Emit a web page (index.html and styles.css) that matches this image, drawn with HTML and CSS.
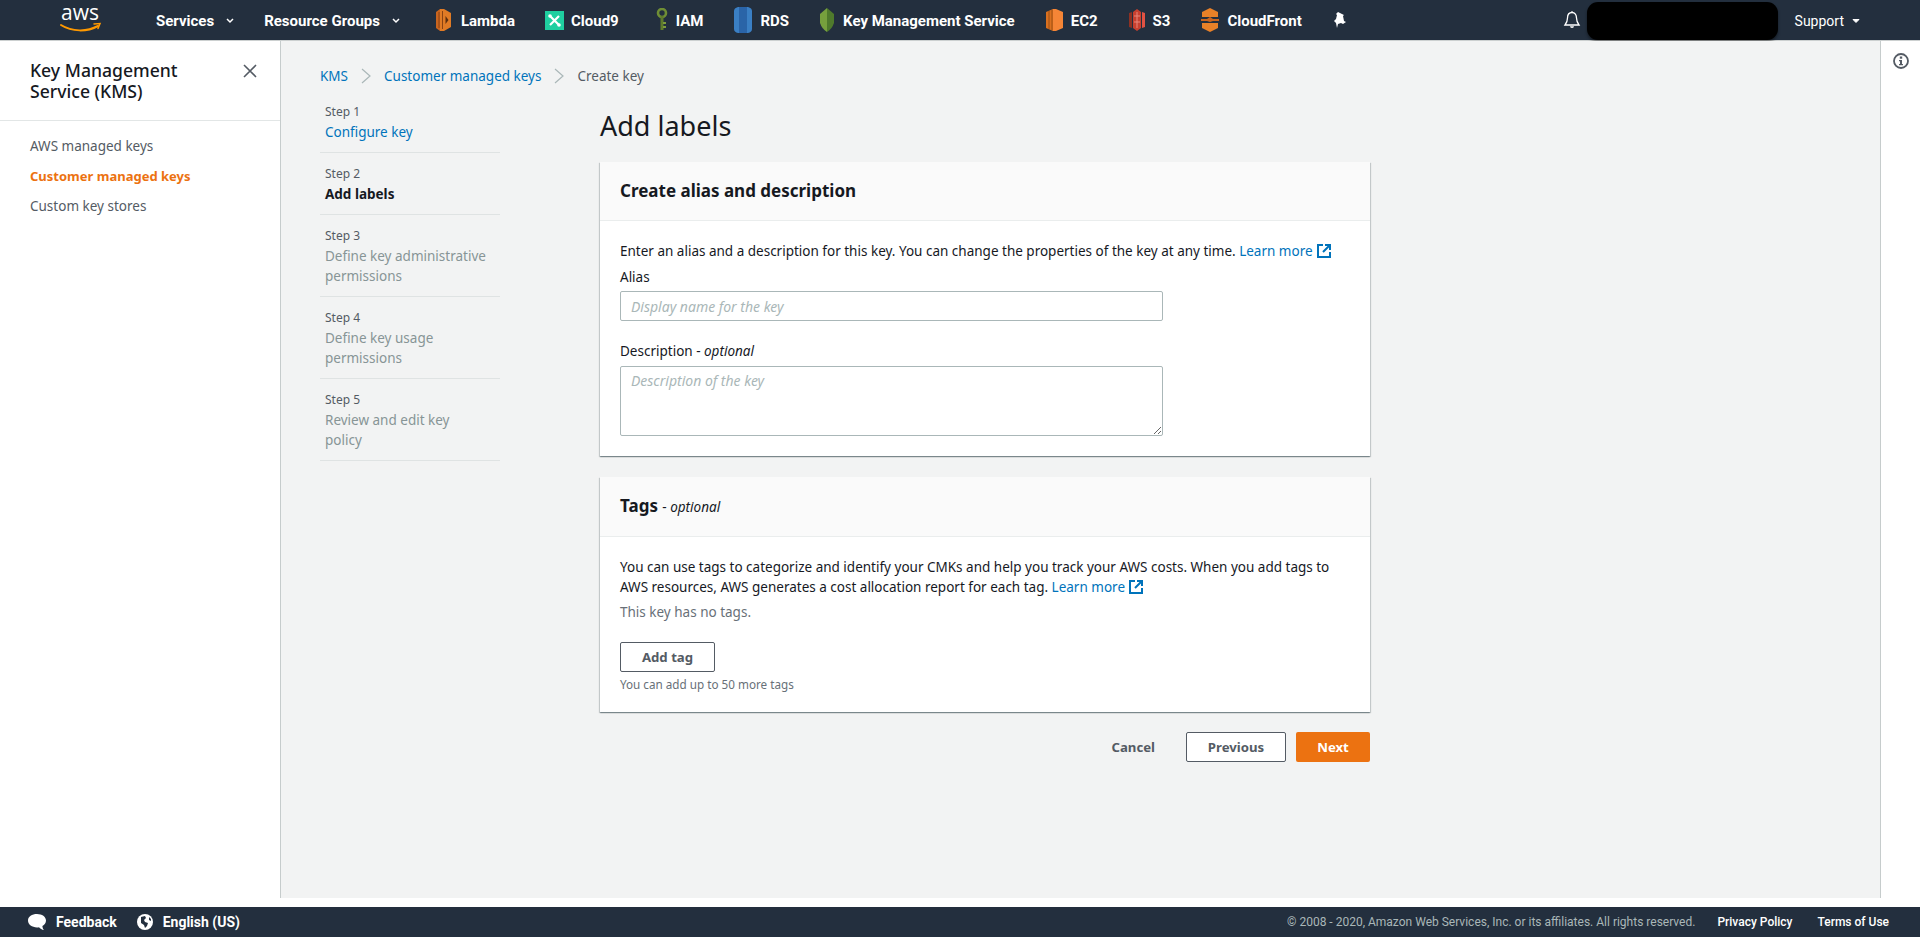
FILE: index.html
```html
<!DOCTYPE html>
<html lang="en">
<head>
<meta charset="utf-8">
<title>Create key</title>
<link rel="stylesheet" href="styles.css">
</head>
<body>
<header class="topbar">
  <svg class="logo" width="42" height="34" viewBox="0 0 42 34"><text x="20" y="17" text-anchor="middle" class="logo-text">aws</text><path d="M1 22c11 7 26 7 37 1" fill="none" stroke="#f90" stroke-width="2" stroke-linecap="round"/><path d="M34 21l6-.5-2 5" fill="none" stroke="#f90" stroke-width="1.500" stroke-linecap="round"/></svg>
  <a class="menu menu-services">Services<svg class="caret" width="8" height="6" viewBox="0 0 8 6"><path d="M1 1l3 3 3-3" fill="none" stroke="#fff" stroke-width="1.500"/></svg></a>
  <a class="menu menu-groups">Resource Groups<svg class="caret" width="8" height="6" viewBox="0 0 8 6"><path d="M1 1l3 3 3-3" fill="none" stroke="#fff" stroke-width="1.500"/></svg></a>
  <nav class="shortcuts">
    <a class="shortcut s-lambda"><svg width="17" height="24" viewBox="0 0 17 24"><path d="M5 1l-4 3v16l4 3z" fill="#c9651f"/><path d="M5 1h4l7 4v14l-7 4H5z" fill="#e07b25"/><path d="M7.500 3v18M4 4v16" stroke="#8a4312"/><path d="M10.500 8l3 4-3 4z" fill="#5c2f0f"/></svg>Lambda</a>
    <a class="shortcut s-c9"><svg width="19" height="19" viewBox="0 0 19 19"><rect width="19" height="19" fill="#1fcfa0"/><path d="M5 5l9 9M14 5l-9 9" stroke="#fff" stroke-width="2.200"/><circle cx="5" cy="5" r="1.800" fill="#fff"/><circle cx="14" cy="14" r="1.800" fill="#fff"/></svg>Cloud9</a>
    <a class="shortcut s-iam"><svg width="12" height="24" viewBox="0 0 12 24"><circle cx="6" cy="5" r="4" fill="none" stroke="#6f8e35" stroke-width="2.600"/><path d="M6 8v14" stroke="#5e7a2c" stroke-width="3"/><path d="M7 15h3M7 19h3" stroke="#7d9c3c" stroke-width="2"/></svg>IAM</a>
    <a class="shortcut"><svg width="18" height="26" viewBox="0 0 18 26"><path d="M4 0h10q4 1 4 4v18q0 3-4 4H4q-4-1-4-4V4q0-3 4-4z" fill="#3a7fc4"/><path d="M5 0h8v26H5z" fill="#2a64a8"/></svg>RDS</a>
    <a class="shortcut s-kms"><svg width="16" height="24" viewBox="0 0 16 24"><path d="M8 0l7 6v9q-2 6-7 9z" fill="#4f7a2c"/><path d="M8 0L1 6v9q2 6 7 9z" fill="#76a03d"/></svg>Key Management Service</a>
    <a class="shortcut"><svg width="17" height="24" viewBox="0 0 17 24"><path d="M7 1L0 4v16l7 3z" fill="#d9701f"/><path d="M7 1h3l7 3v16l-7 3H7z" fill="#f58536"/><path d="M3 3v18M6 2v20" stroke="#9c4f14"/></svg>EC2</a>
    <a class="shortcut"><svg width="16" height="24" viewBox="0 0 16 24"><path d="M0 5l3-1v16l-3-1z" fill="#8c3123"/><path d="M16 5l-3-1v16l3-1z" fill="#e05243"/><path d="M4 4l4-3 4 3v16l-4 3-4-3z" fill="#c7402f"/><path d="M5 8h6M5 14h6M8 4v16" stroke="#e8867a"/></svg>S3</a>
    <a class="shortcut"><svg width="18" height="24" viewBox="0 0 18 24"><path d="M9 0L1 4v5h16V4z" fill="#e88128"/><path d="M1 15h16v5l-8 4-8-4z" fill="#e88128"/><path d="M0 11h6l3-2 3 2h6v2h-6l-3 1-3-1H0z" fill="#c9651f"/></svg>CloudFront</a>
    <a class="pin"><svg width="14" height="16" viewBox="0 0 14 16"><path d="M5 0l6 3-1 1 1 5 2 1-3 2-2-1-3 1-1 4-1-5-2-2 2-2 1-4-1-1z" fill="#fff"/></svg></a>
  </nav>
  <div class="top-right">
    <svg class="bell" width="18" height="18" viewBox="0 0 18 18"><path d="M9 1.500c-3 0-4.500 2.500-4.500 5.500 0 3.500-1 5-2.500 7h14c-1.500-2-2.500-3.500-2.500-7 0-3-1.500-5.500-4.500-5.500z" fill="none" stroke="#fff" stroke-width="1.300"/><path d="M7 15.300h4a2 1.700 0 0 1-4 0z" fill="#fff"/><path d="M9 0v2" stroke="#fff"/></svg>
    <div class="redact"></div>
    <a class="support">Support<svg class="caret" width="8" height="6" viewBox="0 0 8 6"><path d="M1 1.500l3 3 3-3z" fill="#fff" stroke="#fff"/></svg></a>
  </div>
</header>

<div class="shell">
  <aside class="sidebar">
    <div class="side-head">
      <h2>Key Management Service (KMS)</h2>
      <svg class="close" width="14" height="14" viewBox="0 0 14 14"><path d="M1 1l12 12M13 1L1 13" stroke="#545b64" stroke-width="1.600"/></svg>
    </div>
    <ul class="side-nav">
      <li>AWS managed keys</li>
      <li class="active">Customer managed keys</li>
      <li>Custom key stores</li>
    </ul>
  </aside>

  <main class="content">
    <div class="crumbs">
      <a class="link">KMS</a>
      <svg width="10" height="16" viewBox="0 0 10 16"><path d="M1 1l8 7-8 7" fill="none" stroke="#aab7b8" stroke-width="1.200"/></svg>
      <a class="link">Customer managed keys</a>
      <svg width="10" height="16" viewBox="0 0 10 16"><path d="M1 1l8 7-8 7" fill="none" stroke="#aab7b8" stroke-width="1.200"/></svg>
      <span class="crumb-now">Create key</span>
    </div>
    <div class="wizard">
      <ol class="steps">
        <li><small>Step 1</small><a class="link">Configure key</a></li>
        <li><small>Step 2</small><b>Add labels</b></li>
        <li class="off"><small>Step 3</small><span>Define key administrative permissions</span></li>
        <li class="off"><small>Step 4</small><span>Define key usage permissions</span></li>
        <li class="off"><small>Step 5</small><span>Review and edit key policy</span></li>
      </ol>
      <section class="form">
        <h1>Add labels</h1>
        <div class="card">
          <div class="card-head"><h3>Create alias and description</h3></div>
          <div class="card-body body-alias">
            <p>Enter an alias and a description for this key. You can change the properties of the key at any time. <a class="link">Learn more</a><svg class="ext" width="14" height="14" viewBox="0 0 14 14"><path d="M6 1H1v12h12V8" fill="none" stroke="#0073bb" stroke-width="2"/><path d="M8 1h5v5M13 1L6 8" fill="none" stroke="#0073bb" stroke-width="2"/></svg></p>
            <label class="lbl">Alias</label>
            <input class="field" type="text" placeholder="Display name for the key">
            <label class="lbl lbl-desc">Description - <i>optional</i></label>
            <textarea class="field area" placeholder="Description of the key"></textarea>
          </div>
        </div>
        <div class="card">
          <div class="card-head head-tags"><h3>Tags <span class="opt">- <i>optional</i></span></h3></div>
          <div class="card-body body-tags">
            <p>You can use tags to categorize and identify your CMKs and help you track your AWS costs. When you add tags to AWS resources, AWS generates a cost allocation report for each tag. <a class="link">Learn more</a><svg class="ext" width="14" height="14" viewBox="0 0 14 14"><path d="M6 1H1v12h12V8" fill="none" stroke="#0073bb" stroke-width="2"/><path d="M8 1h5v5M13 1L6 8" fill="none" stroke="#0073bb" stroke-width="2"/></svg></p>
            <p class="muted">This key has no tags.</p>
            <button class="btn btn-tag">Add tag</button>
            <p class="hint">You can add up to 50 more tags</p>
          </div>
        </div>
        <div class="actions">
          <button class="btn-text">Cancel</button>
          <button class="btn btn-prev">Previous</button>
          <button class="btn-next">Next</button>
        </div>
      </section>
    </div>
  </main>

  <aside class="rail">
    <svg width="16" height="16" viewBox="0 0 16 16"><circle cx="8" cy="8" r="7" fill="none" stroke="#545b64" stroke-width="1.800"/><rect x="6.800" y="3.500" width="2.400" height="2.200" fill="#545b64"/><path d="M6 7h3v4h1v1.300H6V11h1V8.300H6z" fill="#545b64"/></svg>
  </aside>
</div>

<footer class="footer">
  <a class="foot-item"><svg width="18" height="17" viewBox="0 0 18 17"><path d="M9 0c5 0 9 2.800 9 6.500 0 2.400-1.500 4.300-3.600 5.400.1 1.500.6 3 1.600 4.100-2.100-.4-3.800-1.400-5-2.800-.6.100-1.300.2-2 .2-5 0-9-3-9-6.900S4 0 9 0z" fill="#fff"/></svg>Feedback</a>
  <a class="foot-item foot-lang"><svg width="16" height="16" viewBox="0 0 16 16"><circle cx="8" cy="8" r="8" fill="#fff"/><path d="M4 3l4-1 1 2-2 2 1 2 3 1-1 3-2 2-1-3-3-2zM12 3l2 2v2l-2-1z" fill="#232f3e"/></svg>English (US)</a>
  <div class="foot-right">
    <span class="copy">© 2008 - 2020, Amazon Web Services, Inc. or its affiliates. All rights reserved.</span>
    <a>Privacy Policy</a>
    <a>Terms of Use</a>
  </div>
</footer>
</body>
</html>
```

FILE: styles.css
```css
* { box-sizing: border-box; }
html, body { height: 100%; }
body {
  margin: 0;
  height: 937px;
  overflow: hidden;
  display: flex;
  flex-direction: column;
  background: #fff;
  font-family: "Noto Sans", "Open Sans", sans-serif;
  font-size: 13.5px;
  line-height: 20px;
  color: #16191f;
}
h1, h2, h3, p, ul, ol { margin: 0; padding: 0; }
ul, ol { list-style: none; }
.link { color: #0073bb; }

/* top bar */
.topbar {
  flex: 0 0 41px;
  height: 41px;
  display: flex;
  align-items: center;
  background: #232f3e;
  border-bottom: 1px solid #ccd0d0;
  color: #fff;
  font-family: Roboto, sans-serif;
  font-weight: 700;
  font-size: 15px;
}
.logo { margin-left: 60px; flex: none; overflow: visible; }
.logo-text { font-family: "Open Sans", sans-serif; font-size: 21px; font-weight: 400; fill: #fff; }
.menu { display: flex; align-items: center; padding-top: 2px; }
.menu-services { margin-left: 54px; }
.menu-groups { margin-left: 30px; }
.caret { margin-left: 12px; }
.shortcuts { display: flex; align-items: center; margin-left: 35px; }
.shortcut { display: flex; align-items: center; gap: 8px; margin-right: 31px; padding-top: 2px; white-space: nowrap; }
.shortcut svg { margin-top: -2px; }
.s-lambda { gap: 9px; margin-right: 30px; }
.s-c9 { gap: 7px; }
.s-iam { margin-left: 6px; }
.s-kms { margin-left: -1px; }
.top-right { display: flex; align-items: center; margin-left: auto; font-weight: 400; font-size: 14px; }
.pin { display: flex; }
.bell { margin-right: 6px; }
.redact {
  width: 191px;
  height: 38px;
  margin-top: 2px;
  background: #000;
  border-radius: 11px;
  box-shadow: 0 2px 3px rgba(0, 0, 0, .45);
}
.support { display: flex; align-items: center; margin: 0 60px 0 17px; padding-top: 1px; }
.support .caret { margin-left: 8px; }

/* shell */
.shell { flex: 0 0 857px; display: flex; min-height: 0; }
.sidebar { flex: 0 0 281px; background: #fff; border-right: 1px solid #c6cccc; }
.side-head {
  display: flex;
  justify-content: space-between;
  align-items: flex-start;
  height: 80px;
  padding: 19px 23px 0 30px;
  border-bottom: 1px solid #e2e6e6;
}
.side-head h2 { width: 170px; font-size: 17.6px; line-height: 21px; font-weight: 500; }
.close { margin-top: 4px; }
.side-nav { padding-top: 10px; color: #545b64; }
.side-nav li { height: 30px; line-height: 30px; padding-left: 30px; }
.side-nav .active { color: #ec7211; font-weight: 700; font-size: 13px; }

.content { flex: 1; background: #f2f3f3; padding: 25px 0 0 39px; min-width: 0; }
.crumbs { display: flex; align-items: center; gap: 13px; height: 20px; }
.crumb-now { color: #545b64; }
.wizard { display: flex; gap: 100px; margin-top: 5px; }

.steps { flex: 0 0 180px; }
.steps li { padding: 11px 12px 10px 5px; border-bottom: 1px solid #dfe3e3; display: flex; flex-direction: column; }
.steps small { font-size: 12px; line-height: 20px; color: #545b64; }
.steps b { font-weight: 700; color: #16191f; }
.steps .off span { color: #879596; }

.form { flex: 0 0 770px; }
h1 { font-size: 27px; line-height: 36px; font-weight: 400; margin: 17px 0 18px; }
.card {
  background: #fff;
  margin-bottom: 21px;
  box-shadow: 0 1px 1px 0 rgba(0, 28, 36, .3), 1px 1px 1px 0 rgba(0, 28, 36, .15), -1px 1px 1px 0 rgba(0, 28, 36, .15);
}
.card-head { height: 59px; padding: 0 20px; display: flex; align-items: center; background: #fafafa; border-bottom: 1px solid #eaeded; }
.head-tags { height: 60px; }
.card-head h3 { font-size: 17px; font-weight: 700; }
.opt { font-size: 13.5px; font-weight: 400; }
.card-body { padding: 20px 20px 0; }
.body-alias { height: 235px; }
.body-tags { height: 175px; }
.ext { margin-left: 4px; vertical-align: -2px; }
.lbl { display: block; margin-top: 6px; height: 20px; }
.lbl-desc { margin-top: 20px; }
.field {
  display: block;
  width: 543px;
  height: 30px;
  margin-top: 4px;
  padding: 4px 10px;
  font: 14px/20px "Noto Sans", sans-serif;
  color: #16191f;
  background: #fff;
  border: 1px solid #aab7b8;
  border-radius: 2px;
  outline: none;
}
.field::placeholder { color: #aab7b8; font-style: italic; opacity: 1; }
.area { height: 70px; margin-top: 5px; }
.muted { color: #687078; margin-top: 5px; }
.btn {
  height: 30px;
  background: #fff;
  border: 1px solid #545b64;
  border-radius: 2px;
  color: #545b64;
  font: 700 13.2px/20px "Noto Sans", sans-serif;
  padding: 0;
}
.btn-tag { display: block; width: 95px; margin-top: 20px; }
.hint { font-size: 11.7px; line-height: 16px; color: #687078; margin-top: 4px; }
.actions { display: flex; justify-content: flex-end; align-items: center; margin-top: -1px; }
.btn-text { background: none; border: 0; padding: 0; margin-right: 31px; color: #545b64; font: 700 13.2px/20px "Noto Sans", sans-serif; }
.btn-prev { width: 100px; margin-right: 10px; }
.btn-next { width: 74px; height: 30px; background: #ec7211; border: 0; border-radius: 2px; color: #fff; font: 700 13.2px/20px "Noto Sans", sans-serif; padding: 0; }

.rail { flex: 0 0 40px; background: #fff; border-left: 1px solid #c6cccc; display: flex; justify-content: center; padding-top: 12px; }

/* footer */
.footer {
  flex: 0 0 30px;
  margin-top: 9px;
  display: flex;
  align-items: center;
  background: #232f3e;
  color: #fff;
  padding: 0 31px 0 28px;
  font-family: Roboto, sans-serif;
  font-weight: 700;
  font-size: 14px;
}
.foot-item { display: flex; align-items: center; gap: 10px; }
.foot-lang { margin-left: 20px; }
.foot-right { margin-left: auto; display: flex; gap: 25px; font-size: 12px; font-weight: 500; }
.copy { color: #aab7b8; font-weight: 400; margin-right: -3px; }
```
